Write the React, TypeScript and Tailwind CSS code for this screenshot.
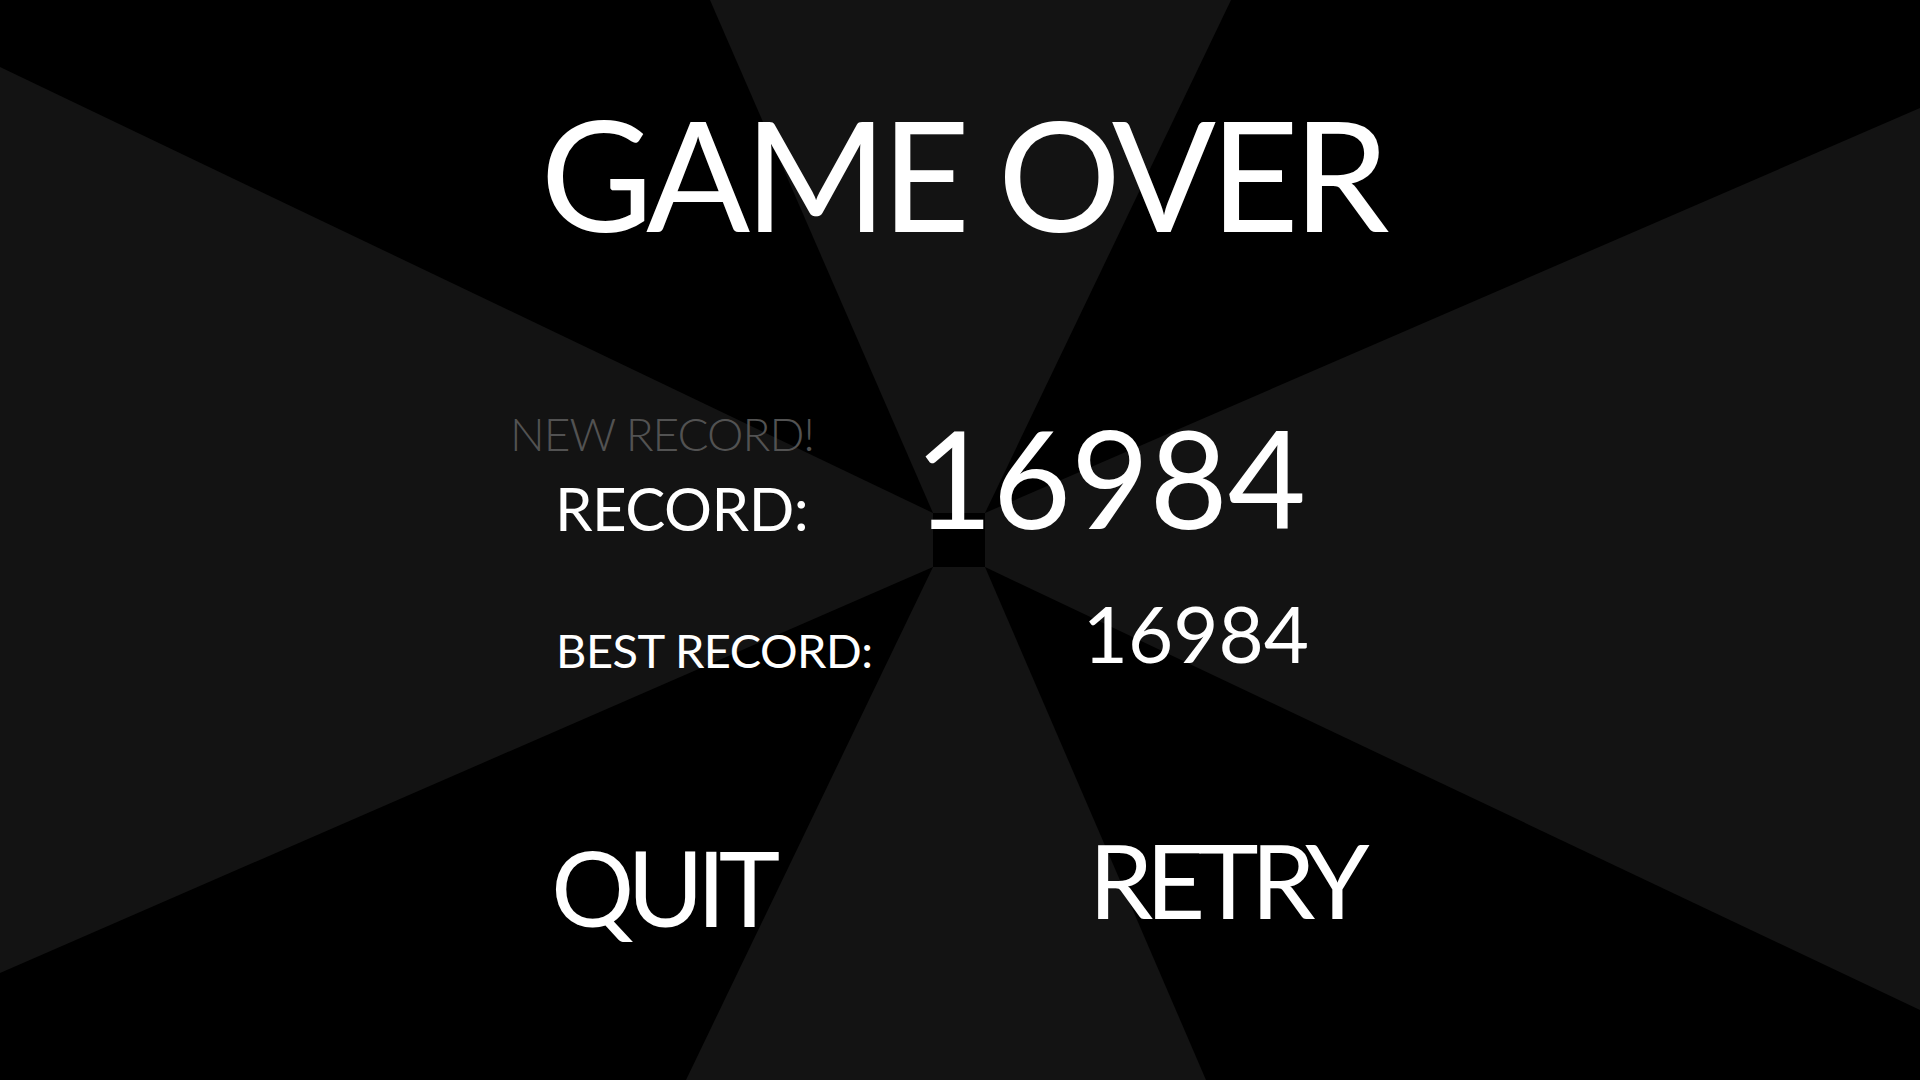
export default function App() {
  const font = { fontFamily: "Lato, 'Noto Sans', sans-serif" };

  return (
    <div className="relative w-[1920px] h-[1080px] overflow-hidden bg-black text-white" style={font}>
      {/* Tunnel background */}
      <svg className="absolute inset-0" width="1920" height="1080" viewBox="0 0 1920 1080">
        <rect width="1920" height="1080" fill="#000" />
        <polygon points="933,513 985,513 1231,0 710,0" fill="#131313" />
        <polygon points="933,513 933,567 0,973 0,67" fill="#131313" />
        <polygon points="933,567 985,567 1206,1080 686,1080" fill="#131313" />
        <polygon points="985,513 985,567 1920,1010 1920,108" fill="#131313" />
        <rect x="933" y="513" width="52" height="54" fill="#000" />
      </svg>

      <div className="relative flex flex-col">
        <h1 className="pt-[96px] pl-[4px] text-center text-[154px] leading-none font-normal tracking-[-6px]">
          GAME OVER
        </h1>

        {/* Record row */}
        <div className="mt-[161px] ml-[510px] w-[792px] flex items-start justify-between">
          <div className="flex flex-col">
            <span className="text-[46px] leading-none font-light tracking-[-1px] text-[#525252]">NEW RECORD!</span>
            <span className="mt-[21px] ml-[45px] text-[60px] leading-none tracking-[-0.5px]">RECORD:</span>
          </div>
          <span className="text-[135px] leading-none -mt-[1px] mr-[-4px]">16984</span>
        </div>

        {/* Best record row */}
        <div className="mt-[49px] ml-[556px] w-[749px] flex items-start justify-between">
          <span className="mt-[33px] text-[47px] leading-none tracking-[-0.5px]">BEST RECORD:</span>
          <span className="text-[78px] leading-none mr-[-4px]">16984</span>
        </div>

        {/* Buttons */}
        <div className="mt-[154px] ml-[551px] w-[811px] flex items-start justify-between">
          <button className="mt-[7px] text-[104px] leading-none tracking-[-7px]">QUIT</button>
          <button className="text-[103px] leading-none tracking-[-7.5px]">RETRY</button>
        </div>
      </div>
    </div>
  );
}
